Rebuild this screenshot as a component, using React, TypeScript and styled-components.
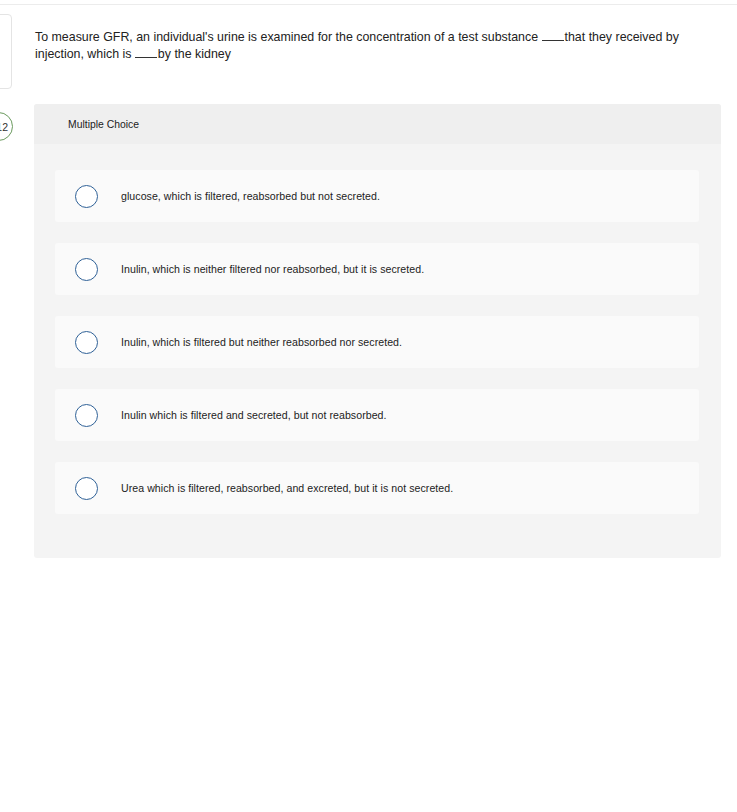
import React from "react";
import styled, { createGlobalStyle } from "styled-components";

const Global = createGlobalStyle`
  html, body { margin: 0; padding: 0; background: #ffffff; }
  body { font-family: "Liberation Sans", Arial, sans-serif; color: #222; overflow: hidden; }
`;

const TopStrip = styled.div`
  height: 4px;
  border-bottom: 1px solid #ececec;
`;

const Layout = styled.div`
  display: flex;
  gap: 22px;
  padding-right: 16px;
`;

const Rail = styled.div`
  width: 42px;
  margin-left: -30px;
  display: flex;
  flex-direction: column;
  align-items: flex-end;
  flex-shrink: 0;
`;

const SideCard = styled.div`
  margin-top: 9px;
  width: 42px;
  height: 75px;
  box-sizing: border-box;
  border: 1px solid #e4e4e4;
  border-radius: 4px;
  background: #fff;
`;

const Badge = styled.div`
  margin-top: 23px;
  margin-right: -1px;
  width: 29px;
  height: 29px;
  box-sizing: border-box;
  border: 1.5px solid #6a9a5e;
  border-radius: 50%;
  display: flex;
  align-items: center;
  justify-content: flex-end;
  padding-right: 4px;
  font-size: 10.5px;
  color: #333;
  background: #fff;
`;

const Main = styled.div`
  flex: 1;
  display: flex;
  flex-direction: column;
`;

const Question = styled.p`
  margin: 24px 0 0 1px;
  max-width: 668px;
  font-size: 12.4px;
  line-height: 17px;
  color: #222;
  letter-spacing: 0;
`;

const Blank = styled.span`
  display: inline-block;
  width: 22px;
  border-bottom: 1px solid #333;
  margin-right: 1px;
  vertical-align: baseline;
`;

const Panel = styled.section`
  margin-top: 41px;
  background: #f4f4f4;
  border-radius: 3px;
  overflow: hidden;
  padding-bottom: 44px;
`;

const PanelHeader = styled.div`
  height: 40px;
  background: #efefef;
  display: flex;
  align-items: center;
  padding-left: 34px;
  font-size: 10.4px;
  color: #222;
`;

const Options = styled.div`
  display: flex;
  flex-direction: column;
  gap: 21px;
  padding: 26px 22px 0 21px;
`;

const Option = styled.label`
  height: 52px;
  background: #fafafa;
  border-radius: 3px;
  display: flex;
  align-items: center;
  padding-left: 20px;
  gap: 23px;
  font-size: 10.6px;
  letter-spacing: 0.05px;
  color: #222;
`;

const Radio = styled.span`
  width: 23px;
  height: 23px;
  box-sizing: border-box;
  border: 1.5px solid #2f6197;
  border-radius: 50%;
  background: #fff;
  flex-shrink: 0;
`;

const options = [
  "glucose, which is filtered, reabsorbed but not secreted.",
  "Inulin, which is neither filtered nor reabsorbed, but it is secreted.",
  "Inulin, which is filtered but neither reabsorbed nor secreted.",
  "Inulin which is filtered and secreted, but not reabsorbed.",
  "Urea which is filtered, reabsorbed, and excreted, but it is not secreted.",
];

export default function App() {
  return (
    <>
      <Global />
      <TopStrip />
      <Layout>
        <Rail>
          <SideCard />
          <Badge>12</Badge>
        </Rail>
        <Main>
          <Question>
            To measure GFR, an individual's urine is examined for the concentration of a test substance{" "}
            <Blank />that they received by injection, which is <Blank />by the kidney
          </Question>
          <Panel>
            <PanelHeader>Multiple Choice</PanelHeader>
            <Options>
              {options.map((o) => (
                <Option key={o}>
                  <Radio />
                  <span>{o}</span>
                </Option>
              ))}
            </Options>
          </Panel>
        </Main>
      </Layout>
    </>
  );
}
